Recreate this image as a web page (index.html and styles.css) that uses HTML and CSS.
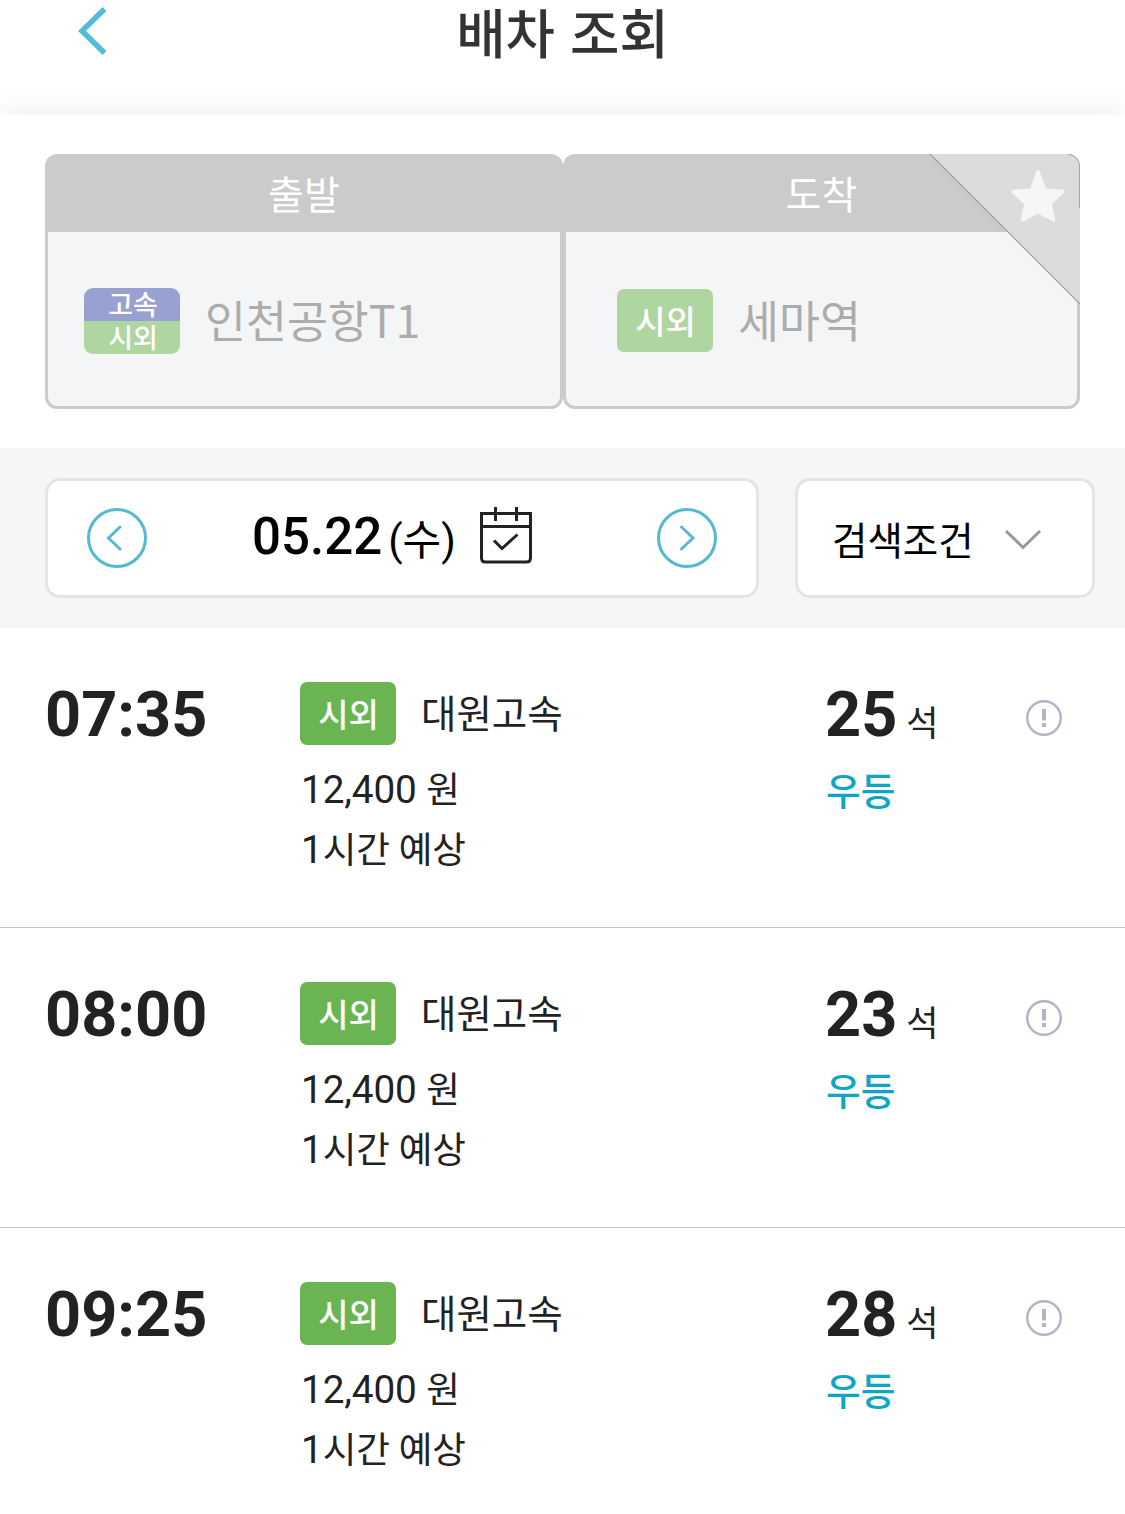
FILE: index.html
```html
<!DOCTYPE html>
<html lang="ko">
<head>
<meta charset="utf-8">
<title>배차 조회</title>
<link rel="stylesheet" href="styles.css">
</head>
<body>
<header class="topbar">
  <svg class="back" width="30" height="50" viewBox="0 0 30 50"><path d="M26.500 3 4 25l22.500 22" fill="none" stroke="#54bdd6" stroke-width="5.5"/></svg>
  <h1 class="title">배차 조회</h1>
</header>

<section class="route">
  <div class="stop">
    <div class="stop-head">출발</div>
    <div class="stop-body">
      <div class="badge-split"><span class="half express">고속</span><span class="half intercity">시외</span></div>
      <span class="stop-name">인천공항T1</span>
    </div>
  </div>
  <div class="stop arrival">
    <div class="stop-head">도착</div>
    <div class="stop-body">
      <span class="badge muted">시외</span>
      <span class="stop-name">세마역</span>
    </div>
    <svg class="favorite" width="150" height="150" viewBox="0 0 150 150">
      <path d="M0 0H138A12 12 0 0 1 150 12V150Z" fill="#dcdcdc"/>
      <path d="M0 0 150 150" stroke="#999" stroke-width="1.1"/>
      <path d="M138 .5A11.500 11.500 0 0 1 149.500 12V54" fill="none" stroke="#a6a6a6"/>
      <path d="M108 17.500 114.500 36 133 37.500 120 49.500 123.500 66 108 57.500 92.500 66 96 49.500 83 37.500 101.500 36Z" fill="#f5f6f7" stroke="#f5f6f7" stroke-width="3.500" stroke-linejoin="round"/>
    </svg>
  </div>
</section>

<section class="filters">
  <div class="date-box">
    <svg width="60" height="60" viewBox="0 0 60 60" fill="none" stroke="#55b9d1" stroke-width="3"><circle cx="30" cy="30" r="28.500"/><path d="M33 19 21.500 30 33 41" stroke-linecap="round"/></svg>
    <div class="date">
      <span class="day">05.22</span><span class="weekday">(수)</span>
      <svg class="calendar" width="52" height="58" viewBox="0 0 52 58" fill="none" stroke="#222" stroke-width="3"><path d="M1.500 7.500h49v44.500q0 4-4 4h-41q-4 0-4-4ZM1.500 20.500h49M15.500 1v14M36.500 1v14"/><path d="m14 34.500 8 8 15.500-14"/></svg>
    </div>
    <svg class="next" width="60" height="60" viewBox="0 0 60 60" fill="none" stroke="#55b9d1" stroke-width="3"><circle cx="30" cy="30" r="28.500"/><path d="m24.500 19 11.500 11-11.500 11" stroke-linecap="round"/></svg>
  </div>
  <div class="condition">
    <span class="condition-label">검색조건</span>
    <svg class="expand" width="38" height="22" viewBox="0 0 38 22"><path d="m2 2 17 16.500L36 2" fill="none" stroke="#999" stroke-width="3"/></svg>
  </div>
</section>

<main class="list">
  <article class="trip">
    <div class="time">07:35</div>
    <div class="info">
      <div class="company"><span class="badge">시외</span><span class="name">대원고속</span></div>
      <div class="detail">12,400 <span class="ko">원</span></div>
      <div class="detail">1<span class="ko">시간 예상</span></div>
    </div>
    <div class="seats">
      <div class="count">25<span class="unit">석</span></div>
      <div class="grade">우등</div>
    </div>
    <svg class="notice" width="36" height="36" viewBox="0 0 36 36"><circle cx="18" cy="18" r="16.750" fill="none" stroke="#b5b4c6" stroke-width="2.500"/><path d="M16 9h4v11.500h-4zM16 23h4v4h-4z" fill="#b5b4c6"/></svg>
  </article>
  <article class="trip">
    <div class="time">08:00</div>
    <div class="info">
      <div class="company"><span class="badge">시외</span><span class="name">대원고속</span></div>
      <div class="detail">12,400 <span class="ko">원</span></div>
      <div class="detail">1<span class="ko">시간 예상</span></div>
    </div>
    <div class="seats">
      <div class="count">23<span class="unit">석</span></div>
      <div class="grade">우등</div>
    </div>
    <svg class="notice" width="36" height="36" viewBox="0 0 36 36"><circle cx="18" cy="18" r="16.750" fill="none" stroke="#b5b4c6" stroke-width="2.500"/><path d="M16 9h4v11.500h-4zM16 23h4v4h-4z" fill="#b5b4c6"/></svg>
  </article>
  <article class="trip">
    <div class="time">09:25</div>
    <div class="info">
      <div class="company"><span class="badge">시외</span><span class="name">대원고속</span></div>
      <div class="detail">12,400 <span class="ko">원</span></div>
      <div class="detail">1<span class="ko">시간 예상</span></div>
    </div>
    <div class="seats">
      <div class="count">28<span class="unit">석</span></div>
      <div class="grade">우등</div>
    </div>
    <svg class="notice" width="36" height="36" viewBox="0 0 36 36"><circle cx="18" cy="18" r="16.750" fill="none" stroke="#b5b4c6" stroke-width="2.500"/><path d="M16 9h4v11.500h-4zM16 23h4v4h-4z" fill="#b5b4c6"/></svg>
  </article>
</main>
</body>
</html>
```
FILE: styles.css
```css
* { box-sizing: border-box; }
body {
  margin: 0;
  width: 1125px;
  height: 1514px;
  overflow: hidden;
  background: #fff;
  color: #222;
  font-family: Roboto, "Noto Sans CJK KR", sans-serif;
  white-space: nowrap;
}
svg { display: block; flex: none; }

.topbar {
  display: grid;
  grid-template-columns: 77px 1fr 77px;
  height: 115px;
}
.back { grid-column: 1; justify-self: end; margin: 6px -31px 0 0; }
.title {
  grid-column: 2;
  margin: 0;
  text-align: center;
  font-size: 53.7px;
  line-height: 62px;
  font-weight: 500;
  color: #333;
  font-family: "Noto Sans CJK KR", sans-serif;
}

.route {
  display: flex;
  height: 333px;
  padding: 39px 45px;
  background: #fff;
  box-shadow: 0 0 30px rgba(0, 0, 0, .09);
  font-family: "Noto Sans CJK KR", sans-serif;
}
.stop {
  position: relative;
  width: 518px;
  height: 255px;
  border: 3px solid #cbcbcb;
  border-radius: 12px;
  background: #f3f5f6;
}
.stop.arrival { width: 517px; }
.stop-head {
  height: 75px;
  border-radius: 8px 8px 0 0;
  background: #cbcbcb;
  color: #fff;
  text-align: center;
  font-size: 39px;
  line-height: 70px;
}
.stop-body {
  display: flex;
  align-items: center;
  gap: 25px;
  height: 177px;
  padding-left: 36px;
}
.arrival .stop-body { padding-left: 51px; }
.stop-name {
  margin-bottom: 4px;
  font-size: 44.5px;
  line-height: 60px;
  color: #acacac;
}
.badge-split {
  width: 96px;
  height: 66px;
  border-radius: 9px;
  overflow: hidden;
}
.half {
  display: block;
  height: 33px;
  padding-left: 2px;
  color: #fff;
  text-align: center;
  font-size: 27px;
  line-height: 32px;
  font-weight: 500;
}
.express { background: #99a0d2; }
.intercity { background: #afd5a1; }
.badge {
  width: 96px;
  height: 63px;
  padding-left: 1px;
  border-radius: 7px;
  background: #6ab551;
  color: #fff;
  text-align: center;
  font-family: "Noto Sans CJK KR", sans-serif;
  font-size: 33px;
  line-height: 62px;
  font-weight: 500;
}
.badge.muted { background: #afd5a1; }
.favorite { position: absolute; top: -3px; right: -3px; }

.filters {
  position: relative;
  display: flex;
  gap: 36px;
  height: 180px;
  padding: 30px 30px 30px 45px;
  background: #f4f6f8;
  color: #000;
}
.date-box, .condition {
  display: flex;
  align-items: center;
  border: 3px solid #e3e4e5;
  border-radius: 15px;
  background: #fff;
}
.date-box { width: 714px; padding: 0 39px; }
.date { display: flex; align-items: center; width: 280px; height: 60px; margin-left: 105px; }
.day { margin-top: -2px; font-size: 51px; line-height: 60px; font-weight: 500; }
.weekday { margin: 5px 0 0 6px; font-size: 42px; line-height: 60px; }
.calendar { margin-left: auto; margin-top: -6px; }
.next { margin-left: auto; }
.condition { width: 300px; padding-left: 34px; }
.condition-label { margin-top: 7px; font-size: 38.5px; line-height: 60px; }
.expand { margin: 3px 50px 0 auto; }

.trip {
  display: grid;
  grid-template-columns: 255px 525px 201px 36px;
  height: 300px;
  padding: 54px 0 0 45px;
  border-bottom: 1px solid #c4c4c4;
}
.trip:last-child { border-bottom: 0; }
.time { font-size: 63px; line-height: 66px; font-weight: 700; }
.company { display: flex; height: 63px; margin-bottom: 15px; }
.name { margin-left: 25px; font-size: 38.5px; line-height: 66px; }
.detail { padding-left: 1px; font-size: 38.7px; line-height: 60px; letter-spacing: -.1px; }
.detail + .detail { margin-top: -1px; }
.ko { font-size: 36.6px; }
.count { font-size: 63px; line-height: 66px; font-weight: 700; }
.unit { margin-left: 9px; font-size: 35px; font-weight: 400; }
.grade { margin-top: 4px; padding-left: 1px; font-size: 37.7px; line-height: 60px; font-weight: 500; color: #0ea5c6; }
.notice { margin-top: 18px; }
```
